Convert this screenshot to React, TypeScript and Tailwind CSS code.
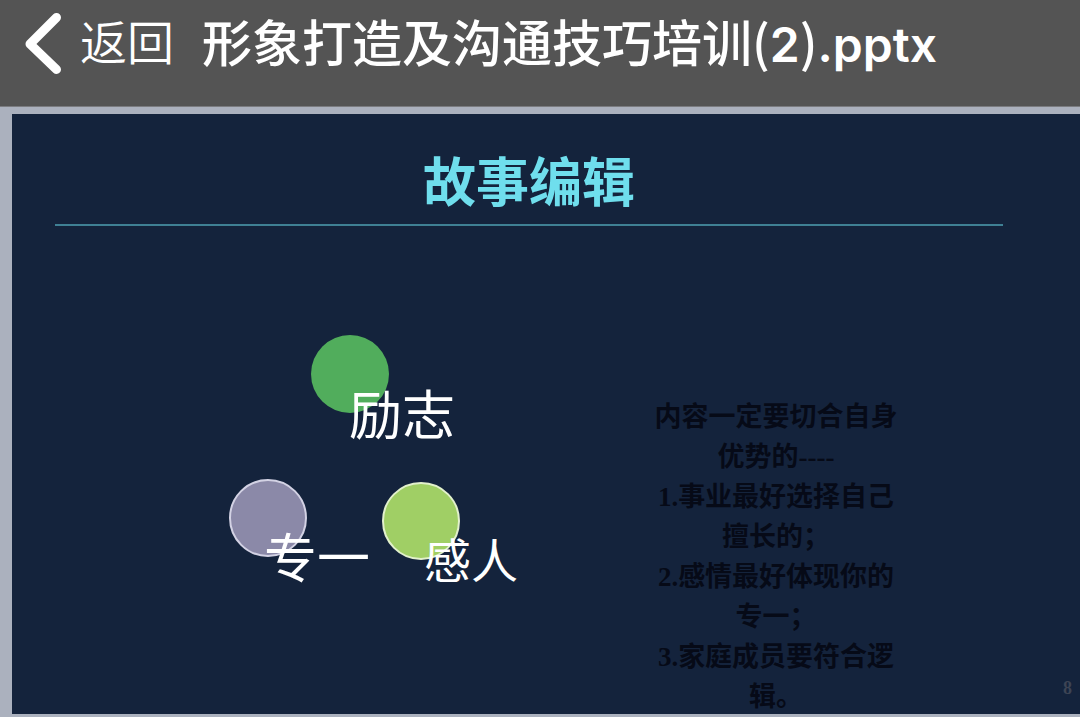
const nodes = [
  { label: "励志", circle: "left-[299px] top-[109px] bg-[#51ad5c]", text: "left-[337px] top-[159px] text-[53px]" },
  { label: "专一", circle: "left-[217px] top-[253px] border-2 border-[#d3d2e4] bg-[#8b89a8]", text: "left-[252px] top-[302px] text-[53px]" },
  { label: "感人", circle: "left-[370px] top-[256px] border-2 border-[#e2f1cc] bg-[#a0cf65]", text: "left-[412px] top-[305px] text-[47px]" },
];

const notes = [
  "内容一定要切合自身优势的----",
  "1.事业最好选择自己擅长的；",
  "2.感情最好体现你的专一；",
  "3.家庭成员要符合逻辑。",
];

function Header() {
  return (
    <header className="flex h-[107px] items-start border-b border-[#7b7c80] bg-[#545454] pl-6 text-white">
      <button
        type="button"
        className="flex shrink-0 items-start gap-4 font-['Noto_Sans_CJK_SC',sans-serif] text-[47px] leading-[80px] font-[350]"
      >
        <svg className="mt-3" width="40" height="64" viewBox="0 0 40 64" fill="none" aria-hidden="true">
          <path d="M32.500 5.500 6 32 32.500 57.500" stroke="currentColor" strokeWidth="9" strokeLinecap="round" strokeLinejoin="round" />
        </svg>
        返回
      </button>
      <h1 className="ml-7 truncate font-['Noto_Sans_CJK_SC',sans-serif] text-[50px] leading-[80px] font-medium">
        形象打造及沟通技巧培训(<span className="font-['Inter',sans-serif] text-[48px] font-semibold">2</span>)
        <span className="font-['Inter',sans-serif] text-[48px] font-semibold">.pptx</span>
      </h1>
    </header>
  );
}

function Diagram() {
  return (
    <div className="relative flex-1">
      {nodes.map((node) => (
        <div key={node.label}>
          <span className={`absolute size-[78px] rounded-full ${node.circle}`} />
          <span className={`absolute leading-[54px] whitespace-nowrap text-white ${node.text}`}>{node.label}</span>
        </div>
      ))}
    </div>
  );
}

export default function App() {
  return (
    <div className="min-h-screen bg-[#abb1be] font-['Noto_Sans_CJK_SC',sans-serif]">
      <Header />
      <main className="pt-[7px] pb-[3px] pl-3">
        <section className="relative flex min-h-[600px] flex-col bg-[#14233c]">
          <h2 className="mr-[77px] ml-[43px] border-b-2 border-[#3f8094] pt-6 pb-1 text-center text-[53px] leading-[82px] font-bold text-[#6fdeed]">
            故事编辑
          </h2>
          <div className="flex flex-1">
            <Diagram />
            <div className="mr-[178px] -mb-1 w-[252px] pt-[171px] text-center font-['Liberation_Serif','Noto_Sans_CJK_SC',serif] text-[27px] leading-[40px] font-bold text-[#060a17]">
              {notes.map((note) => (
                <p key={note}>{note}</p>
              ))}
            </div>
          </div>
          <span className="absolute right-2 bottom-4 font-['Liberation_Serif',serif] text-lg leading-5 font-bold text-[#3d4454]">
            8
          </span>
        </section>
      </main>
    </div>
  );
}
